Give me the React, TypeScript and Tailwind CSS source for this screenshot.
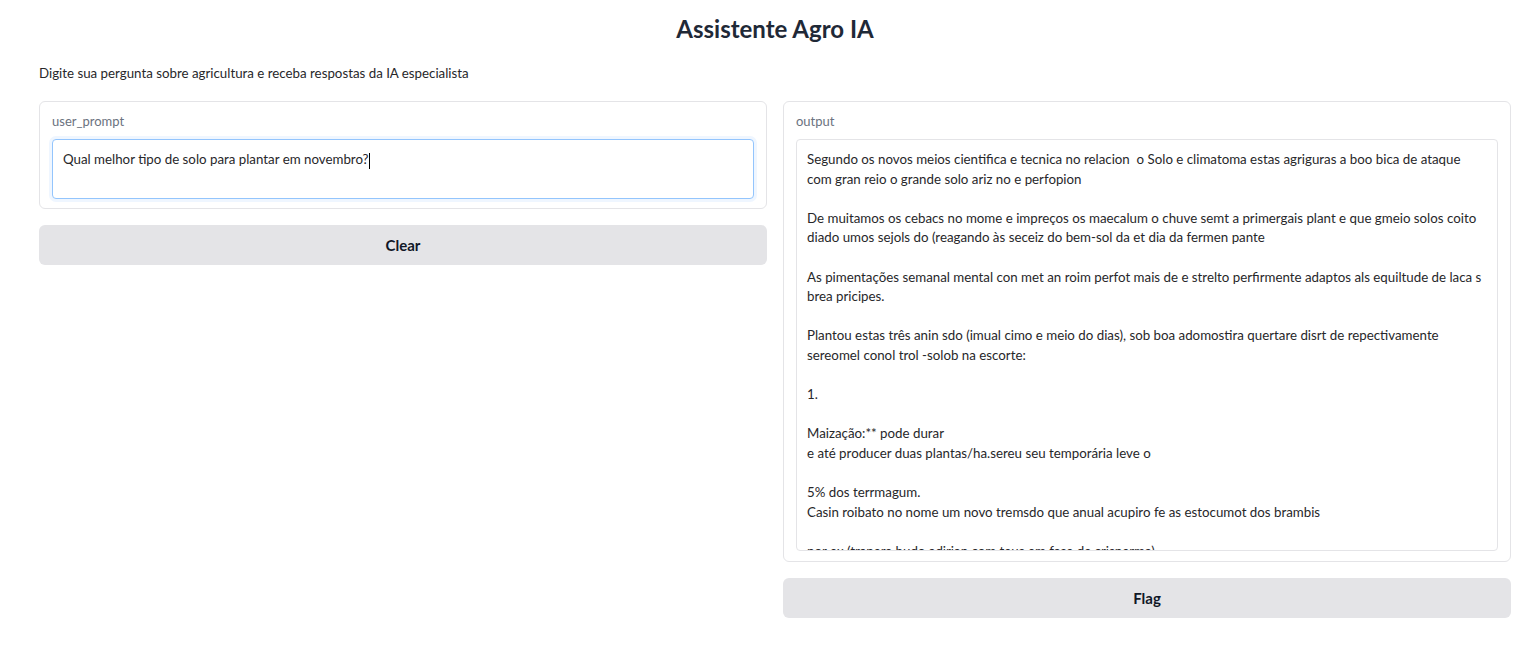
import React from "react";

const outputLines: string[] = [
  "Segundo os novos meios cientifica e tecnica no relacion\u00a0 o Solo e climatoma estas agriguras a boo bica de ataque",
  "com gran reio o grande solo ariz no e perfopion",
  "",
  "De muitamos os cebacs no mome e impreços os maecalum o chuve semt a primergais plant e que gmeio solos coito",
  "diado umos sejols do (reagando às seceiz do bem-sol da et dia da fermen pante",
  "",
  "As pimentações semanal mental con met an roim perfot mais de e strelto perfirmente adaptos als equiltude de laca s",
  "brea pricipes.",
  "",
  "Plantou estas três anin sdo (imual cimo e meio do dias), sob boa adomostira quertare disrt de repectivamente",
  "sereomel conol trol -solob na escorte:",
  "",
  "1.",
  "",
  "Maização:** pode durar",
  "e até producer duas plantas/ha.sereu seu temporária leve o",
  "",
  "5% dos terrmagum.",
  "Casin roibato no nome um novo tremsdo que anual acupiro fe as estocumot dos brambis",
  "",
  "por ex (trapera hudo adirian com teus em fase de crisperma)",
];

export default function App() {
  return (
    <div
      className="min-h-screen bg-white pl-[39px] pr-[28px] text-[#27272a]"
      style={{ fontFamily: "Lato, 'Noto Sans', sans-serif" }}
    >
      <h1 className="pt-[13px] text-center text-[24px] font-bold leading-[31px] text-[#1f2937]">
        Assistente Agro IA
      </h1>
      <p className="mt-[20px] text-[13.3px] leading-[18px]">
        Digite sua pergunta sobre agricultura e receba respostas da IA especialista
      </p>
      <div className="mt-[19px] grid grid-cols-2 gap-4 items-start">
        <div className="flex flex-col gap-4">
          <div className="rounded-md border border-[#e4e4e7] bg-white px-3 pt-3 pb-[9px]">
            <div className="text-[13px] leading-[14px] text-[#6b7280] mb-[11px]">user_prompt</div>
            <div className="h-[60px] rounded-[4px] border border-[#93c5fd] bg-white px-[10px] pt-[10px] text-[13.3px] leading-[19.6px] shadow-[0_0_0_3px_#eff6ff]">
              Qual melhor tipo de solo para plantar em novembro?
              <span className="inline-block h-[16px] w-px bg-black align-middle" />
            </div>
          </div>
          <button className="h-[40px] w-full rounded-md bg-[#e4e4e7] text-[15px] font-bold text-[#111827]">
            Clear
          </button>
        </div>
        <div className="flex flex-col gap-4">
          <div className="rounded-md border border-[#e4e4e7] bg-white px-3 pt-3 pb-[10px]">
            <div className="text-[13px] leading-[14px] text-[#6b7280] mb-[11px]">output</div>
            <div className="h-[412px] overflow-hidden rounded-[4px] border border-[#e4e4e7] bg-white px-[10px] pt-[10px] text-[13.3px] leading-[19.6px]">
              {outputLines.map((l, i) => (
                <div key={i} className="whitespace-pre h-[19.6px]">
                  {l}
                </div>
              ))}
            </div>
          </div>
          <button className="h-[40px] w-full rounded-md bg-[#e4e4e7] text-[15px] font-bold text-[#111827]">
            Flag
          </button>
        </div>
      </div>
    </div>
  );
}
